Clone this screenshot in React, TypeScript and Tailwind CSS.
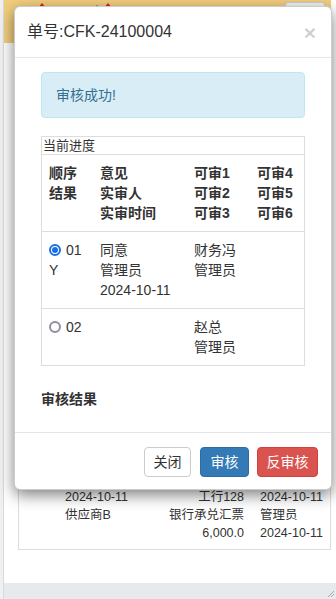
const font = "font-['Liberation_Sans','Noto_Sans_CJK_SC',sans-serif]"

type Row = {
  seq: string
  checked: boolean
  result: string
  opinion: string[]
  approvers: string[]
}

const rows: Row[] = [
  { seq: "01", checked: true, result: "Y", opinion: ["同意", "管理员", "2024-10-11"], approvers: ["财务冯", "管理员"] },
  { seq: "02", checked: false, result: "", opinion: [], approvers: ["赵总", "管理员"] },
]

function Radio({ checked }: { checked: boolean }) {
  return checked ? (
    <span className="flex h-[12px] w-[12px] items-center justify-center rounded-full border-[2px] border-[#1a6fe0] bg-white">
      <span className="h-[6px] w-[6px] rounded-full bg-[#1a6fe0]" />
    </span>
  ) : (
    <span className="h-[12px] w-[12px] rounded-full border-[2px] border-[#8f8f9d] bg-white" />
  )
}

function Lines({ items }: { items: string[] }) {
  return (
    <div>
      {items.map((t, i) => (
        <div key={i} className="h-5 overflow-hidden leading-5">
          {t}
        </div>
      ))}
    </div>
  )
}

function ProgressTable() {
  return (
    <div className="border border-[#dddddd] text-[14px] leading-5 text-[#333]">
      {/* Caption */}
      <div className="h-[18px] overflow-hidden border-b border-[#dddddd] pl-px text-[13px] leading-[18px]">当前进度</div>

      {/* Header */}
      <div className="grid grid-cols-[50px_94px_63px_1fr] border-b border-[#dddddd] py-2 font-bold">
        <div className="pl-[7px]">
          <Lines items={["顺序", "结果"]} />
        </div>
        <div className="pl-2">
          <Lines items={["意见", "实审人", "实审时间"]} />
        </div>
        <div className="pl-2">
          <Lines items={["可审1", "可审2", "可审3"]} />
        </div>
        <div className="pl-2">
          <Lines items={["可审4", "可审5", "可审6"]} />
        </div>
      </div>

      {/* Rows */}
      {rows.map((r, i) => (
        <div
          key={r.seq}
          className={`grid grid-cols-[50px_94px_63px_1fr] py-2 ${i < rows.length - 1 ? "border-b border-[#dddddd]" : ""}`}
        >
          <div className="pl-[7px]">
            <div className="flex h-5 items-center gap-[5px] leading-5">
              <Radio checked={r.checked} />
              <span>{r.seq}</span>
            </div>
            {r.result && <Lines items={[r.result]} />}
          </div>
          <div className="pl-2">
            <Lines items={r.opinion} />
          </div>
          <div className="pl-2">
            <Lines items={r.approvers} />
          </div>
          <div className="pl-2" />
        </div>
      ))}
    </div>
  )
}

function Modal() {
  return (
    <div className="absolute left-[14px] top-[6px] w-[318px] rounded-[6px] border border-black/20 bg-white shadow-[0_5px_15px_rgba(0,0,0,0.5)]">
      {/* Header */}
      <div className="flex h-[51px] items-center justify-between border-b border-[#e5e5e5] pl-[12px] pr-[15px]">
        <h4 className="text-[16px] text-[#333]">单号:CFK-24100004</h4>
        <span className="text-[21px] font-bold leading-none text-black/20">×</span>
      </div>

      {/* Body */}
      <div className="px-[26px] pb-[23px] pt-[14px]">
        <div className="flex h-[46px] items-center rounded-[4px] border border-[#bce8f1] bg-[#d9edf7] pl-[14px] text-[14px] text-[#31708f]">
          审核成功!
        </div>
        <div className="mt-[18px]">
          <ProgressTable />
        </div>
        <div className="mt-[23px] h-5 text-[14px] font-bold leading-5 text-[#333]">审核结果</div>
      </div>

      {/* Footer */}
      <div className="flex justify-end gap-[8px] border-t border-[#e5e5e5] pb-[12px] pr-[13px] pt-[14px] text-[14px]">
        <button className="h-[30px] w-[47px] rounded-[4px] border border-[#cccccc] bg-white text-[#333]">关闭</button>
        <button className="ml-px h-[30px] w-[49px] rounded-[4px] border border-[#2e6da4] bg-[#337ab7] text-white">审核</button>
        <button className="h-[30px] w-[61px] rounded-[4px] border border-[#d43f3a] bg-[#d9534f] text-white">反审核</button>
      </div>
    </div>
  )
}

const bgLine = "h-[18px] overflow-hidden leading-[18px]"

export default function App() {
  return (
    <div className={`relative h-[599px] w-[336px] overflow-hidden bg-white ${font}`}>
      <div className="flex h-full">
        {/* left strip */}
        <div className="w-[4px] border-r border-[#d9d9d9] bg-[#f0f0f0]" />

        <div className="flex flex-1 flex-col">
          {/* Yellow page header */}
          <div className="flex h-[43px] w-[327px] items-start bg-[#f2ce7e] pt-[2px]">
            <span className="ml-[34px] mt-px h-0 w-0 border-x-[4px] border-b-[5px] border-x-transparent border-b-[#e02020]" />
            <span className="ml-[50px] mt-[3px] h-[2px] w-[2px] bg-[#999]" />
            <span className="ml-[6px] mt-px h-0 w-0 border-x-[4px] border-b-[5px] border-x-transparent border-b-[#e02020]" />
            <button className="ml-auto mr-[6px] h-[24px] w-[40px] rounded-[3px] border border-[#ccc] bg-[#f5f5f5] text-[12px] font-bold text-[#222]">
              刷新
            </button>
          </div>

          {/* Background list */}
          <div className="flex-1 pl-[14px] pr-[5px] pt-[10px]">
            <div className="flex h-[497px] flex-col justify-end border border-[#dddddd] pb-[7px] text-[12.5px] text-[#333]">
              <div className="grid grid-cols-[46px_1fr_86px]">
                <div />
                <div className="relative">
                  <div className={bgLine}>2024-10-11</div>
                  <div className={bgLine}>供应商B</div>
                  <div className={bgLine}>&nbsp;</div>
                  <div className="absolute inset-0 text-right">
                    <div className={bgLine}>工行128</div>
                    <div className={bgLine}>银行承兑汇票</div>
                    <div className={bgLine}>6,000.0</div>
                  </div>
                </div>
                <div className="pl-[16px]">
                  <div className={bgLine}>2024-10-11</div>
                  <div className={bgLine}>管理员</div>
                  <div className={bgLine}>2024-10-11</div>
                </div>
              </div>
            </div>
          </div>

          {/* Bottom status bar */}
          <div className="flex h-[16px] items-end justify-end bg-[#e7eaed]">
            <svg width="10" height="10" viewBox="0 0 10 10" className="mb-px mr-px">
              <path d="M9 3 L3 9 M9 6 L6 9" stroke="#aaa" strokeWidth="1" />
            </svg>
          </div>
        </div>
      </div>

      <Modal />
    </div>
  )
}
